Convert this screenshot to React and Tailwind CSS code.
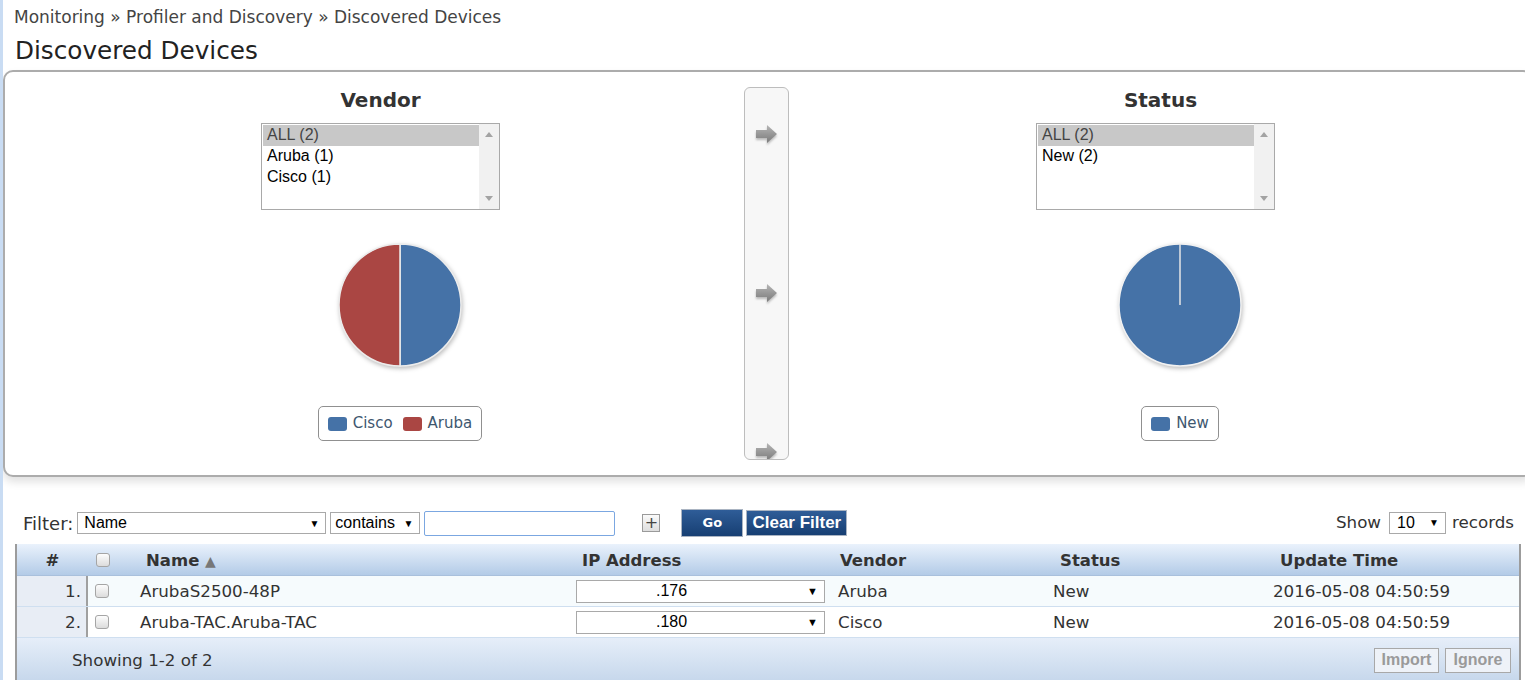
import React from "react";

const V = "font-['DejaVu_Sans',Verdana,sans-serif]";
const A = "font-['Liberation_Sans',Arial,sans-serif]";

function Arrow() {
  return (
    <svg width="24" height="20" viewBox="0 0 24 20" className="shrink-0 drop-shadow-[0_2px_1px_rgba(0,0,0,0.25)]">
      <defs>
        <linearGradient id="ag" x1="0" y1="0" x2="0" y2="1">
          <stop offset="0" stopColor="#b5b5b5" />
          <stop offset="1" stopColor="#7a7a7a" />
        </linearGradient>
      </defs>
      <path d="M1,6 H12 V1 L22,10 L12,19 V14 H1 Z" fill="url(#ag)" />
    </svg>
  );
}

function ListBox({ items }) {
  return (
    <div className={`w-[239px] h-[87px] border border-[#a9a9a9] bg-white flex ${A} text-[16px]`}>
      <div className="flex-1 pt-[1px] pl-[1px]">
        {items.map((it, i) => (
          <div
            key={it}
            className={`h-[21px] leading-[19px] pl-[4px] ${i === 0 ? "bg-[#c8c8c8] text-[#444]" : "text-black"}`}
          >
            {it}
          </div>
        ))}
      </div>
      <div className="w-[20px] bg-[#f1f1f1] flex flex-col items-center justify-between py-[8px]">
        <svg width="8" height="5" viewBox="0 0 8 5"><path d="M0,5 L4,0 L8,5 Z" fill="#a3a3a3" /></svg>
        <svg width="8" height="5" viewBox="0 0 8 5"><path d="M0,0 L4,5 L8,0 Z" fill="#a3a3a3" /></svg>
      </div>
    </div>
  );
}

function Pie({ full }) {
  return (
    <svg width="132" height="132" viewBox="0 0 132 132" className="drop-shadow-[1px_2px_2px_rgba(0,0,0,0.25)]">
      {full ? (
        <>
          <circle cx="66" cy="66" r="61" fill="#4572a7" stroke="#f2f2f2" strokeWidth="1.5" />
          <line x1="66" y1="5" x2="66" y2="66" stroke="#e6e6e6" strokeWidth="1.5" />
        </>
      ) : (
        <>
          <path d="M66,5 A61,61 0 0,1 66,127 Z" fill="#4572a7" stroke="#ececec" strokeWidth="1.5" />
          <path d="M66,127 A61,61 0 0,1 66,5 Z" fill="#aa4643" stroke="#ececec" strokeWidth="1.5" />
        </>
      )}
    </svg>
  );
}

function Legend({ items }) {
  return (
    <div className={`h-[35px] border border-[#909090] rounded-[5px] bg-white flex items-center px-[9px] gap-[10px] ${V} text-[15px] text-[#3e576f]`}>
      {items.map(([c, l]) => (
        <div key={l} className="flex items-center gap-[6px]">
          <span className="w-[19px] h-[14px] rounded-[3px] inline-block" style={{ background: c }} />
          <span>{l}</span>
        </div>
      ))}
    </div>
  );
}

function ChartColumn({ title, items, full, legend, width, headPad, piePad }) {
  return (
    <div className={`${width} flex flex-col items-center pt-[16px]`}>
      <div className={`${V} font-bold text-[20px] leading-[24px] text-[#333] ${headPad}`}>{title}</div>
      <div className="mt-[11px]">
        <ListBox items={items} />
      </div>
      <div className={`flex flex-col items-center ${piePad}`}>
        <div className="mt-[29px]">
          <Pie full={full} />
        </div>
        <div className="mt-[35px]">
          <Legend items={legend} />
        </div>
      </div>
    </div>
  );
}

function Select({ w, h = "h-[22px]", text, tx = "pl-[5px]" }) {
  return (
    <div className={`${w} ${h} border border-[#a9a9a9] bg-white flex items-center justify-between ${A} text-[16px] text-black pr-[6px]`}>
      <span className={tx}>{text}</span>
      <span className="text-[10px]">▼</span>
    </div>
  );
}

function Check() {
  return (
    <span className="inline-block w-[14px] h-[14px] rounded-[3px] border border-[#a5a5a5] bg-gradient-to-b from-[#fdfdfd] to-[#dcdcdc]" />
  );
}

const rows = [
  ["1.", "ArubaS2500-48P", ".176", "Aruba", "New", "2016-05-08 04:50:59", "bg-[#f6fbfd]"],
  ["2.", "Aruba-TAC.Aruba-TAC", ".180", "Cisco", "New", "2016-05-08 04:50:59", "bg-white"],
];

export default function App() {
  return (
    <div className={`w-[1525px] h-[680px] overflow-hidden bg-white border-l-[3px] border-[#c9dcf3] ${V} text-[#333]`}>
      <div className="pl-[11px] pt-[7px] text-[17px] leading-[20px] text-[#444]">
        Monitoring » Profiler and Discovery » Discovered Devices
      </div>
      <div className="pl-[12px] mt-[9px] text-[24.7px] leading-[30px] text-[#222]">Discovered Devices</div>

      <div className="mt-[4px] w-[1530px] h-[407px] border-2 border-[#acacac] rounded-[10px] bg-white shadow-[0_5px_8px_rgba(0,0,0,0.12)] flex items-start">
        <div className="ml-[16px]">
          <ChartColumn
            title="Vendor"
            width="w-[719px]"
            headPad=""
            piePad="pl-[39px]"
            items={["ALL (2)", "Aruba (1)", "Cisco (1)"]}
            legend={[["#4572a7", "Cisco"], ["#aa4643", "Aruba"]]}
          />
        </div>
        <div className="ml-[4px] mt-[15px] w-[45px] h-[373px] border border-[#bdbdbd] rounded-[6px] bg-[#f7f7f7] overflow-hidden flex flex-col items-center pt-[36px] gap-[139px]">
          <Arrow />
          <Arrow />
          <Arrow />
        </div>
        <ChartColumn
          title="Status"
          width="w-[733px]"
          headPad="pl-[10px]"
          piePad="pl-[49px]"
          items={["ALL (2)", "New (2)"]}
          full
          legend={[["#4572a7", "New"]]}
        />
      </div>

      <div className="mt-[32px] h-[28px] ml-[20px] w-[1491px] flex items-center">
        <span className="text-[18px]">Filter:</span>
        <div className="ml-[4px]">
          <Select w="w-[249px]" text="Name" tx="pl-[6px]" />
        </div>
        <div className="ml-[4px]">
          <Select w="w-[90px]" text="contains" tx="pl-[4px]" />
        </div>
        <div className="ml-[4px] w-[191px] h-[25px] border-[1.5px] border-[#7ba7e1] rounded-[2px] bg-white" />
        <div className="ml-[27px] w-[18px] h-[18px] border border-[#9a9a9a] bg-gradient-to-b from-[#fafafa] to-[#dedede] flex items-center justify-center text-[16px] leading-none text-[#444]">
          +
        </div>
        <div className="ml-[21px] w-[62px] h-[28px] border border-[#aab4c2] bg-gradient-to-b from-[#2f5d98] to-[#173f73] flex items-center justify-center text-white font-bold text-[13px]">
          Go
        </div>
        <div className={`ml-[3px] w-[101px] h-[26px] border border-[#aab4c2] bg-gradient-to-b from-[#2f5d98] to-[#173f73] flex items-center justify-center text-white font-bold text-[17px] ${A}`}>
          Clear Filter
        </div>
        <div className="ml-auto flex items-center text-[16.7px]">
          <span>Show</span>
          <div className="ml-[8px]">
            <Select w="w-[57px]" text="10" tx="pl-[7px]" />
          </div>
          <span className="ml-[6px]">records</span>
        </div>
      </div>

      <div className="mt-[7px] ml-[12px] w-[1506px] border-l-2 border-r-2 border-[#9c9c9c] text-[16.7px]">
        <div className="h-[32px] flex items-center pt-[3px] bg-gradient-to-b from-[#eaf2fc] to-[#b3cbe7] border-b border-[#a9c0dc] font-bold text-[#333] text-[16.5px]">
          <div className="w-[71px] text-center">#</div>
          <div className="w-[44px] pl-[8px] self-start pt-[3px]"><Check /></div>
          <div className="w-[440px] pl-[14px]">
            Name <span className="text-[#777] text-[14px]">▲</span>
          </div>
          <div className="w-[262px] pl-[10px]">IP Address</div>
          <div className="w-[215px] pl-[6px]">Vendor</div>
          <div className="w-[220px] pl-[11px]">Status</div>
          <div className="flex-1 pl-[11px]">Update Time</div>
        </div>
        {rows.map(([n, name, ip, vendor, status, time, bg]) => (
          <div key={n} className={`h-[31px] flex items-center border-b border-[#cfdff0] ${bg}`}>
            <div className="w-[71px] self-stretch bg-[#e8edf5] border-r-2 border-[#a0a0a0] text-right pr-[5px] flex items-center justify-end pt-[1px]">{n}</div>
            <div className="w-[44px] pl-[7px] self-start pt-[4px]"><Check /></div>
            <div className="w-[438px] pl-[8px] pt-[1px]">{name}</div>
            <div className="w-[262px] pl-[6px]">
              <div className={`w-[249px] h-[23px] border border-[#a9a9a9] bg-white flex items-center justify-between ${A} text-[16px] text-black pr-[6px]`}>
                <span className="pl-[79px]">{ip}</span>
                <span className="text-[11px]">▼</span>
              </div>
            </div>
            <div className="w-[215px] pl-[6px] pt-[1px]">{vendor}</div>
            <div className="w-[220px] pl-[6px] pt-[1px]">{status}</div>
            <div className="flex-1 pl-[6px] pt-[1px]">{time}</div>
          </div>
        ))}
        <div className="h-[42px] flex items-center bg-gradient-to-b from-[#e6eef9] to-[#c7d8ec] pl-[55px] pr-[8px]">
          <span className="pt-[4px]">Showing 1-2 of 2</span>
          <div className={`ml-auto flex gap-[6px] pt-[2px] ${A} font-bold text-[16px] text-[#9a9a9a]`}>
            <div className="w-[65px] h-[25px] border border-[#a8a8a8] bg-[#eef2f8] flex items-center justify-center">Import</div>
            <div className="w-[66px] h-[25px] border border-[#a8a8a8] bg-[#eef2f8] flex items-center justify-center">Ignore</div>
          </div>
        </div>
      </div>
    </div>
  );
}
